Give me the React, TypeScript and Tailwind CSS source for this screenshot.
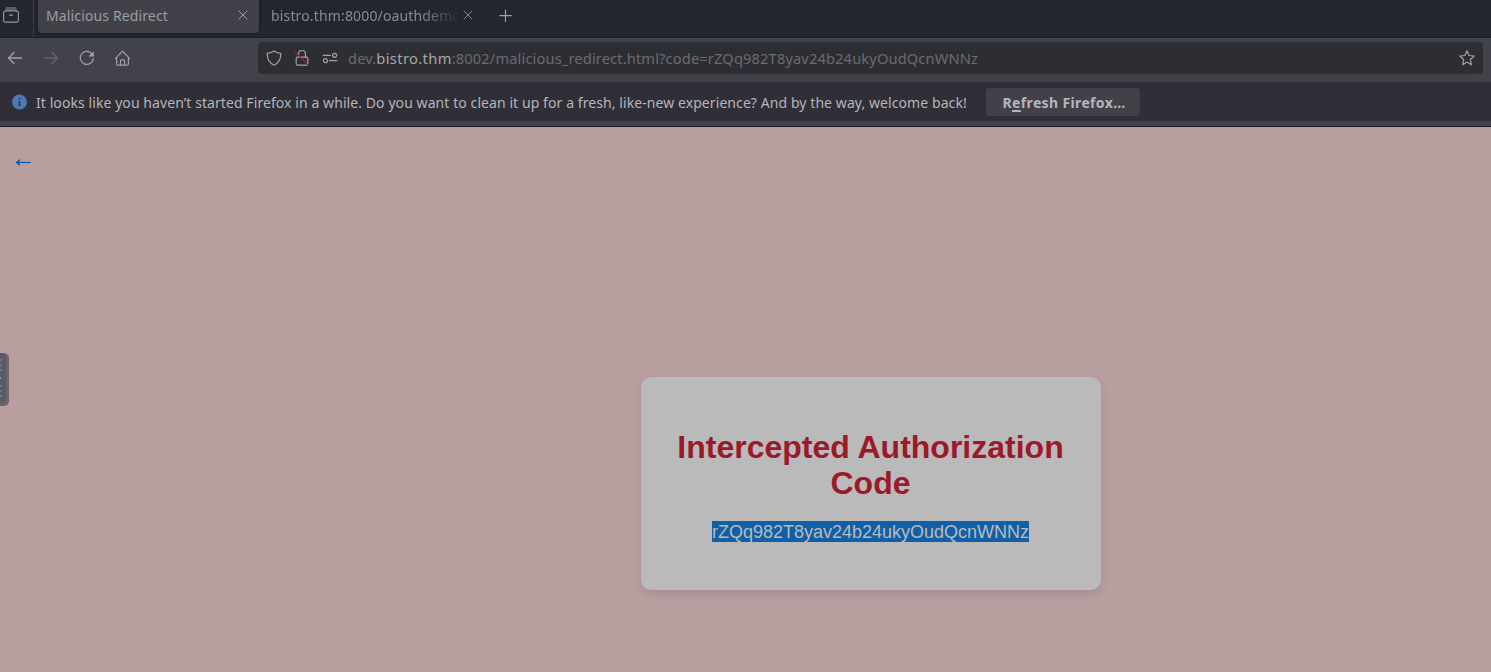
import type { ReactNode } from 'react';

const ui = "font-['Noto_Sans',sans-serif]";

function Icon({ children, className }: { children: ReactNode; className: string }) {
  return (
    <svg viewBox="0 0 16 16" fill="none" stroke="currentColor" strokeWidth="1.2" strokeLinecap="round" strokeLinejoin="round" className={`h-4 w-4 shrink-0 ${className}`}>
      {children}
    </svg>
  );
}

function Close({ className }: { className: string }) {
  return (
    <Icon className={className}>
      <path strokeWidth="1" d="M4 4l8 8M12 4l-8 8" />
    </Icon>
  );
}

function TabBar() {
  return (
    <div className="flex h-[38px] shrink-0 border-b border-[#1b1f27] bg-[#22262e] text-[14px] leading-[31px] text-[#9c9da2]">
      <div className="flex h-[37px] w-[34px] shrink-0 border-r border-[#393c44] pl-[3px] pt-[7px]">
        <Icon className="text-[#92959a]">
          <path d="M3 1h10" />
          <rect x="0.6" y="4" width="14.8" height="11.2" rx="1.8" />
          <path d="M2.500 4l.5-1h10l.5 1M6.500 8.200h3" />
        </Icon>
      </div>
      <div className="ml-1 flex h-[33px] w-[221px] items-start rounded-b-[4px] bg-[#42414a] pl-2 shadow-[0_0_3px_rgba(0,0,0,0.5)]">
        <span className="w-[189px] whitespace-nowrap tracking-[0.13px]">Malicious Redirect</span>
        <Close className="mt-[7px]" />
      </div>
      <div className="flex h-[33px] items-start pl-3 text-[#898b91]">
        <span className="w-[189px] overflow-hidden whitespace-nowrap tracking-[0.15px] [mask-image:linear-gradient(to_right,black_150px,transparent_189px)]">bistro.thm:8000/oauthdemo</span>
        <Close className="mt-[7px]" />
      </div>
      <Icon className="ml-[22px] mt-2 text-[#a0a1a5]">
        <path d="M7.500 2v11.500M1.700 7.700h11.600" />
      </Icon>
    </div>
  );
}

function Toolbar() {
  return (
    <div className="flex h-11 shrink-0 items-center bg-[#41424a] pb-1 pl-[7px] pr-2 text-[#a1a2a7]">
      <Icon className="">
        <path strokeWidth="1.4" d="M1.500 8H14.500M7 2.500L1.500 8L7 13.500" />
      </Icon>
      <Icon className="ml-5 text-[#65666d]">
        <path strokeWidth="1.4" d="M1.500 8H14.500M9 2.500L14.500 8L9 13.500" />
      </Icon>
      <Icon className="ml-5">
        <path d="M14.300 8.500A6.500 6.500 0 1 1 12.400 3.300" />
        <path d="M14.800 1.300v5.200h-5.200z" fill="currentColor" stroke="none" />
      </Icon>
      <Icon className="ml-5">
        <path d="M.5 8.300L7.500 1.100l7 7.200M1.600 7.500v6.500a1.200 1.200 0 0 0 1.200 1.200h9.400a1.200 1.200 0 0 0 1.200-1.200V7.500M5.500 15v-4a1.200 1.200 0 0 1 1.200-1.200h1.600a1.200 1.200 0 0 1 1.200 1.200V15" />
      </Icon>
      <div className="ml-[127px] flex h-8 min-w-0 flex-1 items-center rounded-[4px] bg-[#2d2e33] pl-2 pr-2">
        <Icon className="">
          <path d="M8 .8Q10 2.800 14.700 3.400C15 9 12.500 13 8 15.200C3.500 13 1 9 1.300 3.400Q6 2.800 8 .8z" />
        </Icon>
        <Icon className="ml-3">
          <path d="M4.500 7V4a3.500 3.500 0 0 1 7 0V7" />
          <rect x="2.200" y="7.200" width="11.600" height="8" rx="1.200" />
          <path stroke="#b01640" d="M1.500 2.500L14.200 15.200" />
        </Icon>
        <Icon className="ml-3">
          <circle cx="12.600" cy="5.300" r="2" />
          <circle cx="3.400" cy="10.700" r="2" />
          <path d="M1.200 5.300H8.500M7.500 10.700H14.800" />
        </Icon>
        <span className="ml-[10px] whitespace-nowrap text-[14.67px] tracking-[0.13px] text-[#6a6b70]">
          dev.<span className="tracking-[0.37px] text-[#a6a7ab]">bistro.thm</span>:8002/malicious_redirect.html?code=rZQq982T8yav24b24ukyOudQcnWNNz
        </span>
        <Icon className="ml-auto">
          <path d="M8 .8l2 4.700 5.200.5-3.900 3.500 1.100 5.300L8 12.100l-4.400 2.700 1.100-5.300L.8 6 6 5.500z" />
        </Icon>
      </div>
    </div>
  );
}

function Notification() {
  return (
    <div className="flex h-[45px] shrink-0 border-b border-[#191c24] bg-[#41424a] pb-[5px]">
      <div className="flex h-[39px] w-full items-center bg-[#302f38] pl-3 text-[14px] text-[#b5b5ba]">
        <svg viewBox="0 0 16 16" className="h-4 w-4 shrink-0">
          <circle cx="7.500" cy="8" r="7.500" fill="#4d79b3" />
          <path d="M7.500 7v5M7.500 4v1.400" stroke="#282f40" strokeWidth="1.500" />
        </svg>
        <span className="ml-2 w-[932px] pt-[2px] whitespace-nowrap tracking-[0.078px]">
          It looks like you haven’t started Firefox in a while. Do you want to clean it up for a fresh, like-new experience? And by the way, welcome back!
        </span>
        <button className="ml-[18px] h-7 w-[154px] rounded-[4px] bg-[#42414a] pt-[2px] pl-[2px] text-center text-[14px] font-bold whitespace-nowrap tracking-[0.36px]">
          R<span className="underline decoration-2 underline-offset-2">e</span>fresh Firefox…
        </button>
      </div>
    </div>
  );
}

function Page() {
  return (
    <main className="relative flex flex-1 bg-[#b99ea0] font-['Liberation_Sans',sans-serif]">
      <a className="h-6 pl-[14px] pt-[23px] text-[#0c5cab]">
        <svg viewBox="0 0 18 24" className="h-6 w-[18px]" fill="none" stroke="currentColor" strokeWidth="1.200">
          <path d="M2 12.500H17" />
          <path d="M5.500 9.500Q4.500 12 2 12.500Q4.500 13 5.500 15.500" fill="currentColor" />
        </svg>
      </a>
      <div className="absolute left-0 top-[226px] h-[53px] w-[9px] rounded-r-[5px] bg-[#706363]">
        <div className="flex h-[50px] w-[6px] flex-col bg-[#565b67] rounded-r-[5px] pt-[6px]">
          {['a', 'b', 'c'].map((k) => (
            <i key={k} className="mb-[3px] h-[2px] w-[2px] bg-[#71757e]" />
          ))}
          <i className="mt-[3px] mb-[6px] h-[2px] w-[1px] bg-[#9a9ca2]" />
          {['d', 'e', 'f'].map((k) => (
            <i key={k} className="mb-[3px] h-[2px] w-[2px] bg-[#71757e]" />
          ))}
        </div>
      </div>
      <section className="ml-[609px] mt-[250px] flex h-[213px] w-[460px] flex-col items-center rounded-[10px] bg-[#bababa] pt-[52px] pr-px text-center shadow-[0_4px_8px_rgba(0,0,0,0.1)]">
        <h1 className="w-[400px] text-[32px] font-bold leading-9 text-[#9c192a]">Intercepted Authorization Code</h1>
        <p className="mt-5 h-[21px] bg-[#1160a7] text-[18px] leading-[23px] text-[#bababa]">rZQq982T8yav24b24ukyOudQcnWNNz</p>
      </section>
    </main>
  );
}

export default function App() {
  return (
    <div className={`flex h-[672px] w-[1491px] flex-col overflow-hidden ${ui}`}>
      <TabBar />
      <Toolbar />
      <Notification />
      <Page />
    </div>
  );
}
